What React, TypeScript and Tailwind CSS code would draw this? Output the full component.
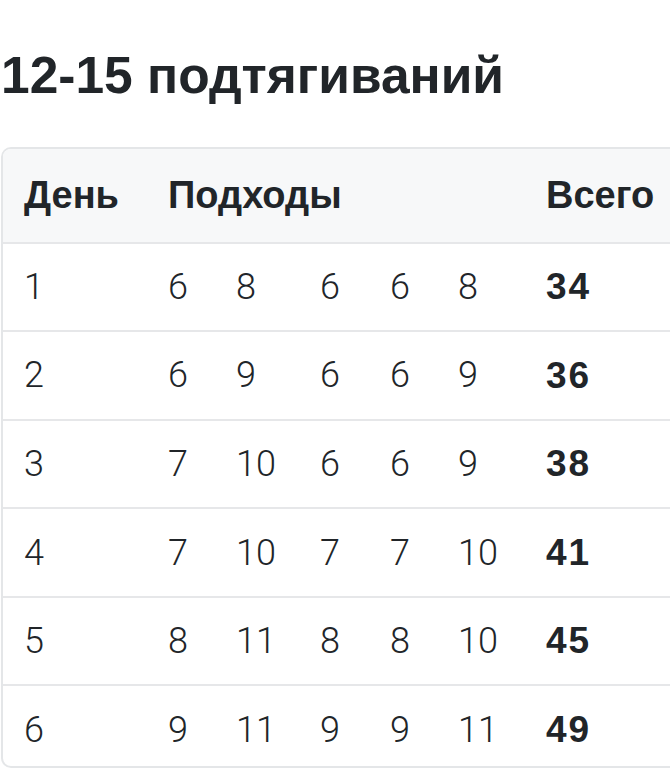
const rows = [
  { day: 1, sets: [6, 8, 6, 6, 8], total: 34 },
  { day: 2, sets: [6, 9, 6, 6, 9], total: 36 },
  { day: 3, sets: [7, 10, 6, 6, 9], total: 38 },
  { day: 4, sets: [7, 10, 7, 7, 10], total: 41 },
  { day: 5, sets: [8, 11, 8, 8, 10], total: 45 },
  { day: 6, sets: [9, 11, 9, 9, 11], total: 49 },
];

const grid = "grid grid-cols-[145px_68px_84px_70px_68px_88px_1fr]";

export default function App() {
  return (
    <div className="h-[768px] w-[670px] overflow-hidden bg-white pl-px text-[#212529]">
      <h1 className="pt-[50px] font-['Liberation_Sans',Arial,sans-serif] text-[51.5px] leading-none font-bold">
        12-15 подтягиваний
      </h1>

      <div className="mt-[45px] w-[720px] rounded-tl-[10px] rounded-bl-[10px] border-2 border-[#e4e6e8]">
        <div
          className={`${grid} h-[93px] items-center rounded-tl-[8px] bg-[#f7f8f9] font-['Liberation_Sans',Arial,sans-serif] text-[38px] font-bold`}
        >
          <div className="pl-[21px]">День</div>
          <div className="col-span-5 pl-[20px]">Подходы</div>
          <div className="pl-[20px]">Всего</div>
        </div>

        {rows.map((r, i) => (
          <div
            key={r.day}
            className={`${grid} items-center border-t-2 border-[#e6e7e9] text-[36px] ${
              i === rows.length - 1 ? "h-[82px] pt-[7px]" : "h-[88.6px]"
            }`}
          >
            <div className="pl-[21px] font-['Roboto',sans-serif] font-light">{r.day}</div>
            {r.sets.map((s, j) => (
              <div key={j} className="pl-[20px] font-['Roboto',sans-serif] font-light">
                {s}
              </div>
            ))}
            <div className="pl-[20px] font-['Liberation_Sans',Arial,sans-serif] text-[37px] font-bold tracking-[2px]">
              {r.total}
            </div>
          </div>
        ))}
      </div>
    </div>
  );
}
